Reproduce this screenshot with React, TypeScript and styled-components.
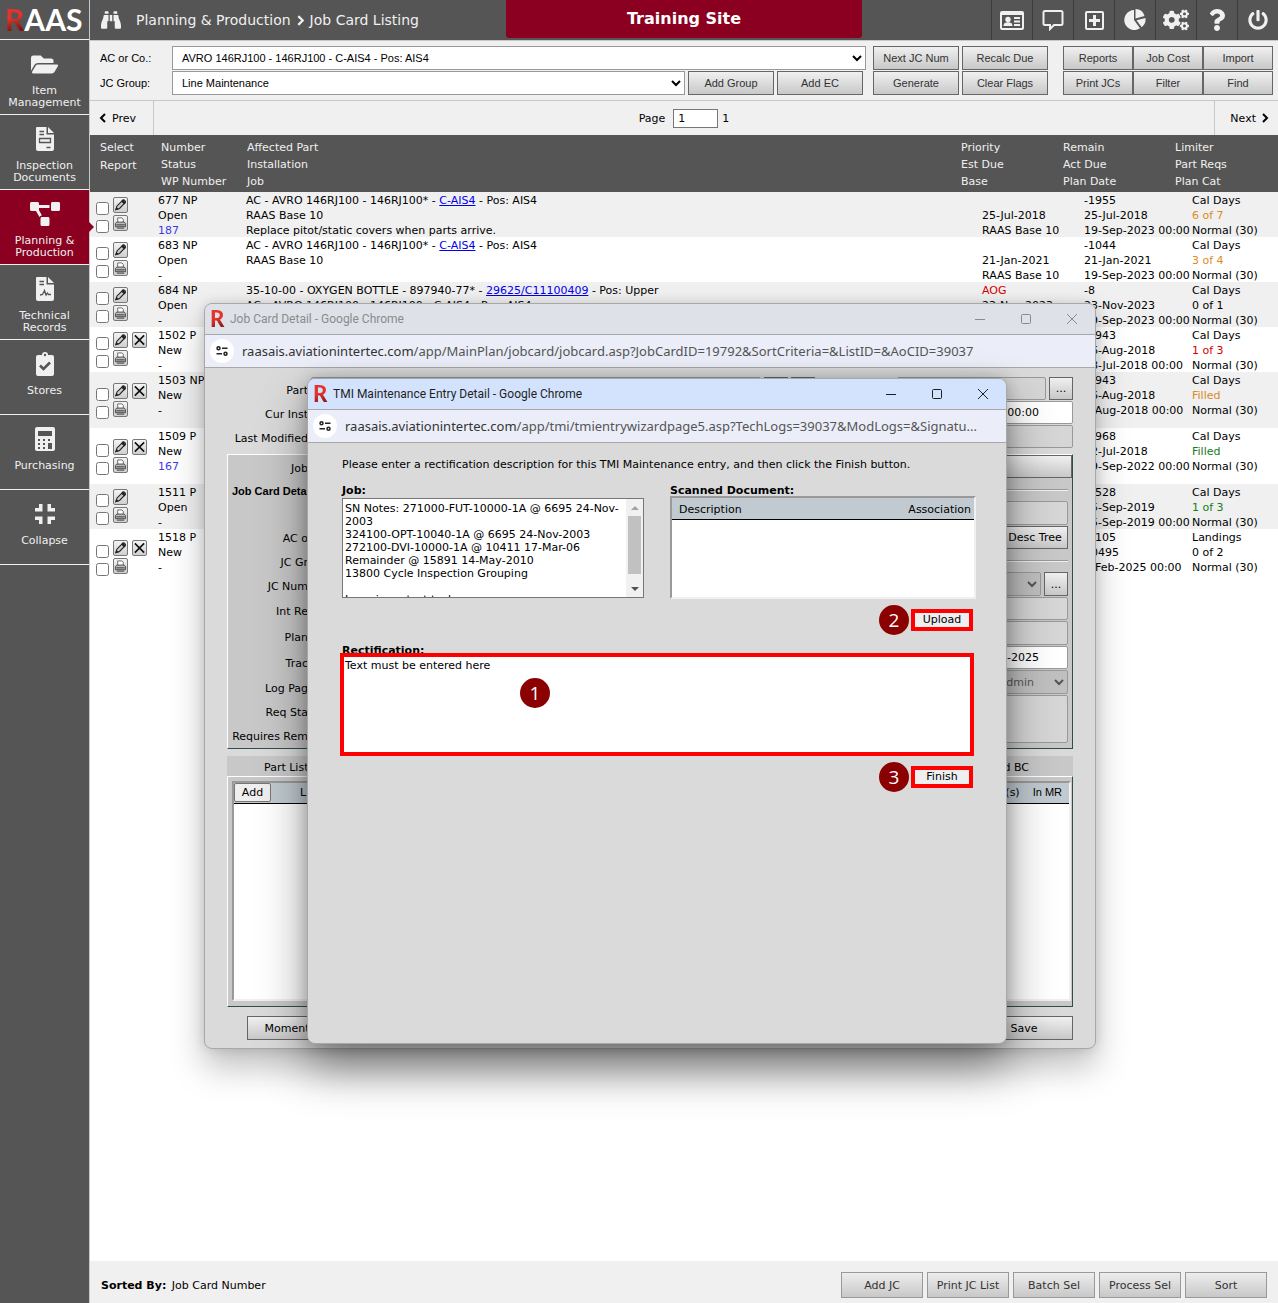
import React from "react";
import styled, { createGlobalStyle, css } from "styled-components";
import {
  FaBinoculars,
  FaCogs,
  FaFolderOpen,
  FaPowerOff,
  FaProjectDiagram,
  FaQuestion,
} from "react-icons/fa";

const ui = '"DejaVu Sans", Verdana, sans-serif';
const arial = '"Liberation Sans", Arial, sans-serif';
const chromeTitle = 'Roboto, "Segoe UI", sans-serif';
const chromeUrl = '"Noto Sans", "Segoe UI", sans-serif';

const GlobalStyle = createGlobalStyle`
  * { box-sizing: border-box; }
  body { margin: 0; background: #fff; color: #000; font: 11px/15px ${ui}; }
  button, input, select, textarea { font: inherit; color: inherit; margin: 0; border-radius: 0; }
  button { padding: 0; white-space: nowrap; }
`;

/* ---------- page frame ---------- */

const Page = styled.div`
  position: relative;
  display: grid;
  grid-template-columns: 90px 1fr;
  min-height: 100vh;
`;

const Sidebar = styled.nav`
  background: #555;
  border-right: 1px solid #c8c8c8;
  color: #f0f0f0;
`;

const Logo = styled.div`
  height: 40px;
  padding-left: 5px;
  border-bottom: 1px solid #f0f0f0;
  color: #fff;
  font: 700 30px/39px Lato, sans-serif;
`;

const RedR = styled.span`
  color: transparent;
  background: linear-gradient(165deg, #e3342c 45%, #7d1512 80%);
  background-clip: text;
  -webkit-background-clip: text;
`;

const NavItem = styled.a<{ $active?: boolean }>`
  position: relative;
  display: flex;
  flex-direction: column;
  align-items: center;
  height: 75px;
  padding-top: 12px;
  border-bottom: 1px solid #f0f0f0;
  background: ${(p) => (p.$active ? "#8b0020" : "transparent")};
  color: inherit;
  line-height: 12px;
  text-align: center;
  text-decoration: none;
  ${(p) =>
    p.$active &&
    css`
      &::after {
        content: "";
        position: absolute;
        top: 32px;
        left: 89px;
        border: 5px solid transparent;
        border-left-color: #8b0020;
        border-right-width: 0;
      }
    `}
`;

const NavIcon = styled.span`
  display: flex;
  align-items: center;
  justify-content: center;
  height: 24px;
  margin-bottom: 9px;
`;

const Main = styled.main`
  display: flex;
  flex-direction: column;
  min-width: 0;
`;

const TopBar = styled.header`
  position: relative;
  display: flex;
  align-items: center;
  height: 41px;
  padding-left: 11px;
  border-bottom: 1px solid #c8c8c8;
  background: #555;
  color: #f0f0f0;
`;

const Crumbs = styled.h1`
  display: flex;
  align-items: center;
  gap: 5px;
  flex: 1;
  margin: 0 0 0 15px;
  font-size: 14px;
  font-weight: 400;
  white-space: nowrap;
`;

const SiteBanner = styled.div`
  position: absolute;
  top: 0;
  left: 35%;
  width: 30%;
  height: 38px;
  border-radius: 0 0 3px 3px;
  background: #8b0020;
  color: #fff;
  font: 700 16px/38px ${ui};
  text-align: center;
`;

const TopButton = styled.button`
  display: flex;
  align-items: center;
  justify-content: center;
  width: 41px;
  height: 40px;
  border: 0;
  border-left: 1px solid #3c3c3c;
  background: transparent;
`;

const ToolBar = styled.div`
  display: flex;
  padding: 5px 5px 5px 10px;
  border-bottom: 1px solid #c8c8c8;
  background: #f0f0f0;
  font-family: ${arial};
`;

const Filters = styled.div`
  display: grid;
  flex: 1;
  gap: 1px;
`;

const FilterRow = styled.div<{ $inset?: boolean }>`
  display: flex;
  gap: 3px;
  height: 24px;
  padding-right: ${(p) => (p.$inset ? 3 : 0)}px;
`;

const FilterLabel = styled.label`
  width: 69px;
  line-height: 24px;
`;

const PlainSelect = styled.select`
  flex: 1;
  min-width: 0;
  padding-left: 5px;
  border: 1px solid #999;
  background: #fff;
`;

const ToolButton = styled.button<{ $w?: number }>`
  width: ${(p) => (p.$w ? `${p.$w}px` : "auto")};
  border: 1px solid #666;
  background: linear-gradient(#f0f0f0, #c8c8c8);
  color: #333;
`;

const ButtonGrid = styled.div<{ $cols: string; $gap: string; $left: number }>`
  display: grid;
  grid-template-columns: ${(p) => p.$cols};
  grid-auto-rows: 24px;
  gap: ${(p) => p.$gap};
  margin-left: ${(p) => p.$left}px;
`;

const Pager = styled.div`
  display: flex;
  justify-content: space-between;
  height: 34px;
  background: #f0f0f0;
`;

const PageStep = styled.button<{ $side: "left" | "right" }>`
  display: flex;
  align-items: center;
  justify-content: ${(p) => (p.$side === "left" ? "flex-start" : "flex-end")};
  gap: 5px;
  width: 64px;
  padding: 0 9px;
  border: 0;
  border-${(p) => (p.$side === "left" ? "right" : "left")}: 1px solid #c8c8c8;
  background: transparent;
`;

const PageLabel = styled.label`
  display: flex;
  align-items: center;
  gap: 4px;
`;

const PageInput = styled.input`
  width: 45px;
  height: 19px;
  margin-left: 4px;
  padding: 0 4px;
  border: 1px solid #767676;
  background: #fff;
`;

/* ---------- job card table ---------- */

const Cards = styled.table`
  width: 100%;
  table-layout: fixed;
  border-collapse: collapse;
  white-space: nowrap;
`;

const HeadCell = styled.th<{ $w?: number; $pad?: number; $line?: number }>`
  width: ${(p) => (p.$w ? `${p.$w}px` : "auto")};
  height: 57px;
  padding: 4px 0 0 ${(p) => p.$pad ?? 0}px;
  background: #555;
  color: #f0f0f0;
  font-weight: 400;
  line-height: ${(p) => p.$line ?? 17}px;
  text-align: left;
  vertical-align: top;
`;

const Row = styled.tr<{ $tall?: boolean }>`
  height: ${(p) => (p.$tall ? 56 : 45)}px;
  background: #fff;
  &:nth-child(odd) { background: #f0f0f0; }
`;

const Cell = styled.td<{ $pad?: number }>`
  padding: 0 0 0 ${(p) => p.$pad ?? 0}px;
  vertical-align: top;
`;

const SelectCell = styled.td`
  padding: 0 0 0 6px;
  vertical-align: middle;
`;

const Picks = styled.div`
  display: grid;
  grid-template-columns: 13px 15px 15px;
  grid-auto-rows: 16px;
  gap: 2px 4px;
  height: 45px;
  padding-top: 5px;
`;

const Tick = styled.input`
  width: 13px;
  height: 13px;
  margin: 5px 0 0;
`;

const IconButton = styled.button`
  display: flex;
  align-items: center;
  justify-content: center;
  width: 15px;
  height: 16px;
  border: 1px solid #777;
  border-radius: 2px;
  background: linear-gradient(#f4f4f4, #cfcfcf);
`;

const Line = styled.div<{ $color?: string }>`
  height: 15px;
  color: ${(p) => p.$color ?? "inherit"};
  line-height: 17px;
`;

const PartLink = styled.a`
  color: #0000ee;
`;

const Footer = styled.footer`
  display: flex;
  align-items: center;
  gap: 4px;
  height: 42px;
  margin-top: auto;
  padding: 6px 11px 0;
  background: #f0f0f0;
`;

const SortInfo = styled.p`
  flex: 1;
  margin: 0;
  line-height: 17px;
  b { margin-right: 2px; }
`;

const FootButton = styled.button`
  width: 82px;
  height: 26px;
  border: 1px solid #999;
  background: linear-gradient(#ededed, #c8c8c8);
  color: #333;
`;

/* ---------- pop-up windows ---------- */

const Window = styled.section<{ $x: number; $y: number; $w: number; $h: number; $active?: boolean }>`
  position: absolute;
  left: ${(p) => p.$x}px;
  top: ${(p) => p.$y}px;
  display: flex;
  flex-direction: column;
  width: ${(p) => p.$w}px;
  height: ${(p) => p.$h}px;
  border: 1px solid #a8a8a8;
  border-radius: 8px;
  overflow: hidden;
  background: #dadada;
  box-shadow: ${(p) =>
    p.$active ? "0 24px 48px rgba(0,0,0,.42), 0 0 16px rgba(0,0,0,.22)" : "0 18px 34px rgba(0,0,0,.26), 0 0 12px rgba(0,0,0,.12)"};
`;

const TitleBar = styled.div<{ $active?: boolean }>`
  display: flex;
  align-items: center;
  height: 31px;
  padding: 0 14px 0 5px;
  border-bottom: 1px solid #a8a8a8;
  background: ${(p) => (p.$active ? "#d3e3fd" : "#dee1e8")};
  color: ${(p) => (p.$active ? "#1f1f1f" : "#8b8b8b")};
  font: 12px/30px ${chromeTitle};
`;

const TitleMark = styled(RedR)`
  width: 20px;
  font: 900 22px/28px Lato, sans-serif;
`;

const TitleText = styled.h2`
  flex: 1;
  margin: 0;
  font: inherit;
`;

const Controls = styled.div`
  display: flex;
  gap: 28px;
  button {
    display: flex;
    width: 18px;
    justify-content: center;
    border: 0;
    background: transparent;
  }
`;

const UrlBar = styled.div`
  display: flex;
  align-items: center;
  gap: 8px;
  height: 33px;
  padding: 0 5px;
  border-bottom: 1px solid #a8a8a8;
  background: #ebeef9;
  color: #555;
  font: 13px/18px ${chromeUrl};
  white-space: nowrap;
  b { color: #333; font-weight: 400; }
`;

const SiteInfo = styled.button`
  display: flex;
  align-items: center;
  justify-content: center;
  flex: none;
  width: 24px;
  height: 24px;
  border: 0;
  border-radius: 50%;
  background: #fff;
`;

const CardBody = styled.div`
  display: flex;
  flex-direction: column;
  padding: 9px 22px 0;
`;

const FormRow = styled.div<{ $h?: number }>`
  display: flex;
  align-items: stretch;
  gap: 3px;
  height: ${(p) => p.$h ?? 24}px;
  padding-bottom: 1px;
`;

const FormLabel = styled.label<{ $w?: number; $h?: number }>`
  flex: none;
  width: ${(p) => p.$w ?? 76}px;
  height: ${(p) => p.$h ?? 24}px;
  padding-top: 2px;
  line-height: 23px;
  text-align: right;
  white-space: nowrap;
`;

const fieldLook = css`
  min-width: 0;
  border: 1px solid #999;
  border-radius: 2px;
  text-align: right;
`;

const Field = styled.input<{ $w?: number; $white?: boolean; $pad?: number }>`
  ${fieldLook}
  flex: ${(p) => (p.$w ? `0 0 ${p.$w}px` : "1")};
  padding: 0 ${(p) => p.$pad ?? 28}px 0 4px;
  background: ${(p) => (p.$white ? "#fff" : "#d6d6d6")};
`;

const GreySelect = styled.select`
  flex: 1;
  border: 1px solid #999;
  border-radius: 2px;
  background: #c0c0c0;
  color: #555;
  text-align-last: right;
  padding-right: 17px;
`;

const GreyArea = styled.textarea`
  ${fieldLook}
  flex: 1;
  background: #d6d6d6;
  resize: none;
`;

const FormButton = styled.button<{ $w?: number }>`
  flex: none;
  width: ${(p) => p.$w ?? 24}px;
  border: 1px solid #666;
  background: linear-gradient(#f0f0f0, #c8c8c8);
`;

const Spacer = styled.div`
  flex: 1;
`;

const Panel = styled.div`
  display: flex;
  flex-direction: column;
  margin-top: 5px;
  padding: 0 4px 6px;
  height: 295px;
  border: 1px solid;
  border-color: #fff #2f4f4f #2f4f4f #fff;
  background: #c8c8c8;
`;

const PanelHead = styled(FormRow)`
  margin-right: -4px;
`;

const SectionTitle = styled.h3`
  margin: 0;
  height: 46px;
  padding-top: 5px;
  font: 700 11px/15px ${arial};
`;

const Rule = styled.hr`
  width: 100%;
  height: 2px;
  margin: 10px 0;
  border: 0;
  border-top: 1px solid #999;
  border-bottom: 1px solid #f0f0f0;
`;

const PanelSplit = styled.div`
  display: grid;
  grid-template-columns: 84px 1fr;
`;

const Stack = styled.div`
  display: flex;
  flex-direction: column;
`;

const Tabs = styled.div`
  display: flex;
  justify-content: space-between;
  height: 20px;
  margin-top: 7px;
  padding: 0 44px 0 37px;
  background: #c8c8c8;
  line-height: 23px;
`;

const ListPanel = styled.div`
  height: 231px;
  padding: 4px 1px 6px 4px;
  border: 1px solid;
  border-color: #fff #2f4f4f #2f4f4f #fff;
  background: #c8c8c8;
`;

const ListBox = styled.div<{ $w?: number; $h: number }>`
  width: ${(p) => (p.$w ? `${p.$w}px` : "100%")};
  height: ${(p) => p.$h}px;
  border: 2px solid;
  border-color: #999 #f0f0f0 #f0f0f0 #999;
  background: #fff;
`;

const ListTable = styled.table`
  width: 100%;
  border-collapse: collapse;
  th {
    height: 21px;
    padding: 3px 3px 0 7px;
    border-bottom: 1px solid #000;
    background: #c0cad0;
    font-weight: 400;
    line-height: 18px;
    text-align: left;
    white-space: nowrap;
  }
  th:last-child { text-align: right; }
`;

const PartTable = styled(ListTable)`
  th { height: 20px; padding: 0 7px 0 0; }
  th:last-child { width: 100%; font-family: ${arial}; }
  span { margin-right: 13px; font-family: ${ui}; }
`;

const AddButton = styled.button`
  width: 37px;
  height: 19px;
  margin-right: 22px;
  border: 1px solid #767676;
  border-radius: 2px;
  background: #efefef;
  vertical-align: top;
`;

const CardActions = styled.div`
  display: flex;
  justify-content: space-between;
  height: 24px;
  margin: 9px 0 0 20px;
`;

const TmiBody = styled.div`
  display: flex;
  flex-direction: column;
  padding: 14px 32px 0 34px;
`;

const Hint = styled.p`
  margin: 0 0 12px;
  white-space: nowrap;
`;

const Columns = styled.div`
  display: flex;
  justify-content: space-between;
  margin-right: -2px;
`;

const BoldLabel = styled.label`
  display: block;
  height: 12px;
  font-weight: 700;
  line-height: 13px;
`;

const JobBox = styled.div`
  display: flex;
  width: 302px;
  height: 100px;
  margin-top: 2px;
  border: 1px solid #767676;
  background: #fff;
`;

const JobText = styled.textarea`
  flex: 1;
  padding: 3px 2px;
  border: 0;
  background: transparent;
  line-height: 13px;
  overflow: hidden;
  resize: none;
`;

const ScrollTrack = styled.div`
  display: flex;
  flex-direction: column;
  align-items: center;
  justify-content: space-between;
  width: 17px;
  padding: 7px 2px 6px;
  background: #f1f1f1;
`;

const ScrollThumb = styled.div`
  width: 13px;
  height: 58px;
  margin-bottom: 8px;
  background: #c1c1c1;
`;

const Arrow = styled.span<{ $up?: boolean }>`
  border: 4px solid transparent;
  ${(p) =>
    p.$up
      ? "border-top-width: 0; border-bottom-color: #a3a3a3;"
      : "border-bottom-width: 0; border-top-color: #505050;"}
`;

const StepRow = styled.div`
  display: flex;
  align-items: center;
  justify-content: flex-end;
  gap: 2px;
  height: 30px;
  margin: 6px 0 9px;
  padding-right: 1px;
`;

const Badge = styled.span`
  display: flex;
  align-items: center;
  justify-content: center;
  width: 30px;
  height: 30px;
  border-radius: 50%;
  background: #8b0000;
  color: #fff;
  font: 19px/28px "Open Sans", sans-serif;
`;

const StepButton = styled.button`
  width: 62px;
  height: 22px;
  border: 4px solid #f00;
  background: #efefef;
  line-height: 14px;
`;

const RectifyWrap = styled.div`
  position: relative;
  margin: -3px 0 0 -2px;
`;

const RectifyText = styled.textarea`
  display: block;
  width: 100%;
  height: 103px;
  padding: 1px;
  border: 4px solid #f00;
  background: #fff;
  resize: none;
`;

const FloatingBadge = styled(Badge)`
  position: absolute;
  top: 25px;
  left: 180px;
`;

/* ---------- drawings ---------- */

const Svg = ({ w, h, box, children }: { w: number; h: number; box: string; children: React.ReactNode }) => (
  <svg width={w} height={h} viewBox={box} fill="currentColor" aria-hidden="true">{children}</svg>
);

const DocIcon = ({ signed }: { signed?: boolean }) => (
  <Svg w={20} h={26} box="0 0 20 26">
    <path d="M2 1h9.500v7.500H19V23a2 2 0 0 1-2 2H3a2 2 0 0 1-2-2V2a1 1 0 0 1 1-1z" />
    <path d="M13 1l6 6h-6z" />
    <g stroke="#555" fill="none" strokeWidth="1.300">
      <path d="M4.500 5.500h4.500M4.500 8.500h4.500" />
      {signed ? <path d="M5 19l2.500-.5 2-4 1.500 4.500 1.500-2 1 1.500h2.500" /> : <path d="M4.500 12.500h11v4h-11zM11.500 21.500h4" />}
    </g>
  </Svg>
);

const StoreIcon = () => (
  <Svg w={20} h={26} box="0 0 20 26">
    <path d="M3 4h4a3 3 0 0 1 6 0h4a2 2 0 0 1 2 2v17a2 2 0 0 1-2 2H3a2 2 0 0 1-2-2V6a2 2 0 0 1 2-2z" />
    <circle cx="10" cy="4" r="1.200" fill="#555" />
    <path d="M5 14.500l3.500 3.500 6.500-6.500" stroke="#555" strokeWidth="2.600" fill="none" />
  </Svg>
);

const CalcIcon = () => (
  <Svg w={22} h={24} box="0 0 22 24">
    <rect x="1" y="0" width="20" height="24" rx="2" />
    <g fill="#555">
      <rect x="4" y="4" width="14" height="5" />
      {[12, 16, 20].map((y) => [4, 9].map((x) => <rect key={`${x}-${y}`} x={x} y={y} width="2" height="2" />))}
      <rect x="14" y="12" width="2" height="2" />
      <rect x="14" y="16" width="4" height="6" />
    </g>
  </Svg>
);

const CollapseIcon = () => (
  <Svg w={22} h={22} box="0 0 22 22">
    <path d="M5 1h3.500v7.500H1V5h4zM13.500 1H17v4h4v3.500h-7.500zM1 13.500h7.500V21H5v-4H1zM13.500 13.500H21V17h-4v4h-3.500z" />
  </Svg>
);

const CardIcon = () => (
  <Svg w={24} h={19} box="0 0 24 19">
    <path fillRule="evenodd" d="M2 0h20a2 2 0 0 1 2 2v15a2 2 0 0 1-2 2H2a2 2 0 0 1-2-2V2a2 2 0 0 1 2-2zM2 4v13h20V4z" />
    <circle cx="8" cy="8.500" r="2.700" />
    <path d="M3.500 15c0-3 2-3.800 4.500-3.800s4.500.8 4.500 3.800z" />
    <path d="M14 6h6v2h-6zM14 9.500h6v2h-6zM14 13h6v2h-6z" />
  </Svg>
);

const ChatIcon = () => (
  <Svg w={22} h={22} box="0 0 22 22">
    <path d="M3 2h16a1.500 1.500 0 0 1 1.500 1.500v11A1.500 1.500 0 0 1 19 16h-7l-4 4v-4H3a1.500 1.500 0 0 1-1.500-1.500v-11A1.500 1.500 0 0 1 3 2z" fill="none" stroke="currentColor" strokeWidth="2" />
  </Svg>
);

const PlusIcon = () => (
  <Svg w={19} h={19} box="0 0 19 19">
    <rect x="1" y="1" width="17" height="17" rx="1" fill="none" stroke="currentColor" strokeWidth="2" />
    <path d="M8 4h3v4h4v3h-4v4H8v-4H4V8h4z" />
  </Svg>
);

const PieIcon = () => (
  <Svg w={24} h={22} box="0 0 24 22">
    <path d="M11 11V1a10 10 0 1 0 6 18.200z" />
    <path d="M12.500 9.500V0a9.500 9.500 0 0 1 9 7z" />
    <path d="M13.500 11.200L22.500 9a10 10 0 0 1-3.800 9.200z" />
  </Svg>
);

const Chevron = ({ left, size = 10 }: { left?: boolean; size?: number }) => (
  <Svg w={size - 2} h={size} box="0 0 8 10">
    <path d={left ? "M6 1L2 5l4 4" : "M2 1l4 4-4 4"} fill="none" stroke="currentColor" strokeWidth="2" />
  </Svg>
);

const PencilIcon = () => (
  <Svg w={14} h={14} box="0 0 14 14">
    <path d="M2 12l1.300-4L9 2.200a1.700 1.700 0 0 1 2.700 2.500L6 10.700z" fill="#ccc" stroke="#222" strokeWidth="1.200" />
    <path d="M1.500 12.500l1-3.500 2.500 2.500zM7.500 3L9.500 1l3.500 3.500-2 2z" fill="#222" />
  </Svg>
);

const PrinterIcon = () => (
  <Svg w={14} h={14} box="0 0 14 14">
    <path d="M4 6V1.500h4.500L10 3v3" fill="#fff" stroke="#666" />
    <path d="M1.500 7.500L3 6h8l1.500 1.500V11h-11z" fill="#bbb" stroke="#444" />
    <path d="M2.500 9h9M3 12.500h8" stroke="#333" />
  </Svg>
);

const CrossIcon = () => (
  <Svg w={14} h={14} box="0 0 14 14">
    <path d="M2 2l10 10M12 2L2 12" stroke="#111" strokeWidth="1.700" />
  </Svg>
);

const TuneIcon = () => (
  <Svg w={12} h={10} box="0 0 12 10">
    <g fill="none" stroke="#222" strokeWidth="1.500">
      <circle cx="2.500" cy="2.300" r="1.500" />
      <path d="M6 2.300h5.500M.5 7.700H6" />
      <circle cx="9.500" cy="7.700" r="1.500" />
    </g>
  </Svg>
);

const WindowControls = () => (
  <Controls>
    <button aria-label="Minimize"><Svg w={10} h={10} box="0 0 10 10"><path d="M0 5.500h10" stroke="currentColor" /></Svg></button>
    <button aria-label="Maximize"><Svg w={10} h={10} box="0 0 10 10"><rect x=".5" y=".5" width="9" height="9" rx="1" fill="none" stroke="currentColor" /></Svg></button>
    <button aria-label="Close"><Svg w={10} h={10} box="0 0 10 10"><path d="M0 0l10 10M10 0L0 10" stroke="currentColor" /></Svg></button>
  </Controls>
);

/* ---------- data ---------- */

const nav = [
  { text: ["Item", "Management"], icon: <FaFolderOpen size={27} /> },
  { text: ["Inspection", "Documents"], icon: <DocIcon /> },
  { text: ["Planning &", "Production"], icon: <FaProjectDiagram size={30} />, active: true },
  { text: ["Technical", "Records"], icon: <DocIcon signed /> },
  { text: ["Stores"], icon: <StoreIcon /> },
  { text: ["Purchasing"], icon: <CalcIcon /> },
  { text: ["Collapse"], icon: <CollapseIcon /> },
];

const topButtons = [
  { name: "Contacts", icon: <CardIcon /> },
  { name: "Messages", icon: <ChatIcon /> },
  { name: "Add", icon: <PlusIcon /> },
  { name: "Statistics", icon: <PieIcon /> },
  { name: "Settings", icon: <FaCogs size={26} /> },
  { name: "Help", icon: <FaQuestion size={22} /> },
  { name: "Log out", icon: <FaPowerOff size={20} /> },
];

const amber = "#dd8a1f";
const red = "#d40000";
const green = "#177d17";
const blue = "#4338e8";

type Card = {
  num: string;
  status: string;
  wp?: string;
  part?: [string, string, string];
  more?: string[];
  due: string[];
  plan: string[];
  limit: string;
  reqs: [string, string?];
  del?: boolean;
  tall?: boolean;
};

const cards: Card[] = [
  { num: "677 NP", status: "Open", wp: "187", part: ["AC - AVRO 146RJ100 - 146RJ100* - ", "C-AIS4", " - Pos: AIS4"], more: ["RAAS Base 10", "Replace pitot/static covers when parts arrive."], due: ["", "25-Jul-2018", "RAAS Base 10"], plan: ["-1955", "25-Jul-2018", "19-Sep-2023 00:00"], limit: "Cal Days", reqs: ["6 of 7", amber] },
  { num: "683 NP", status: "Open", part: ["AC - AVRO 146RJ100 - 146RJ100* - ", "C-AIS4", " - Pos: AIS4"], more: ["RAAS Base 10"], due: ["", "21-Jan-2021", "RAAS Base 10"], plan: ["-1044", "21-Jan-2021", "19-Sep-2023 00:00"], limit: "Cal Days", reqs: ["3 of 4", amber] },
  { num: "684 NP", status: "Open", part: ["35-10-00 - OXYGEN BOTTLE - 897940-77* - ", "29625/C11100409", " - Pos: Upper"], more: ["AC - AVRO 146RJ100 - 146RJ100 - C-AIS4 - Pos: AIS4"], due: ["AOG", "23-Nov-2023"], plan: ["-8", "23-Nov-2023", "19-Sep-2023 00:00"], limit: "Cal Days", reqs: ["0 of 1"] },
  { num: "1502 P", status: "New", due: [], plan: ["-1943", "16-Aug-2018", "18-Jul-2018 00:00"], limit: "Cal Days", reqs: ["1 of 3", red], del: true },
  { num: "1503 NP", status: "New", due: [], plan: ["-1943", "16-Aug-2018", "1-Aug-2018 00:00"], limit: "Cal Days", reqs: ["Filled", amber], del: true, tall: true },
  { num: "1509 P", status: "New", wp: "167", due: [], plan: ["-1968", "12-Jul-2018", "19-Sep-2022 00:00"], limit: "Cal Days", reqs: ["Filled", green], del: true, tall: true },
  { num: "1511 P", status: "Open", due: [], plan: ["-1528", "15-Sep-2019", "15-Sep-2019 00:00"], limit: "Cal Days", reqs: ["1 of 3", green] },
  { num: "1518 P", status: "New", due: [], plan: ["-1105", "10495", "1-Feb-2025 00:00"], limit: "Landings", reqs: ["0 of 2"], del: true, tall: true },
];

const jobNotes = `SN Notes: 271000-FUT-10000-1A @ 6695 24-Nov-2003
324100-OPT-10040-1A @ 6695 24-Nov-2003
272100-DVI-10000-1A @ 10411 17-Mar-06
Remainder @ 15891 14-May-2010
13800 Cycle Inspection Grouping

Learning a test task`;

/* ---------- parts of the page ---------- */

const CardRow = ({ card }: { card: Card }) => (
  <Row $tall={card.tall}>
    <SelectCell>
      <Picks>
        <Tick type="checkbox" aria-label={`Select ${card.num}`} />
        <IconButton aria-label="Edit"><PencilIcon /></IconButton>
        {card.del ? <IconButton aria-label="Delete"><CrossIcon /></IconButton> : <span />}
        <Tick type="checkbox" aria-label={`Report ${card.num}`} />
        <IconButton aria-label="Print"><PrinterIcon /></IconButton>
      </Picks>
    </SelectCell>
    <Cell>
      <Line>{card.num}</Line>
      <Line>{card.status}</Line>
      <Line $color={card.wp && blue}>{card.wp ?? "-"}</Line>
    </Cell>
    <Cell>
      {card.part && <Line>{card.part[0]}<PartLink href="#">{card.part[1]}</PartLink>{card.part[2]}</Line>}
      {card.more?.map((t) => <Line key={t}>{t}</Line>)}
    </Cell>
    <Cell $pad={21}>{card.due.map((t, i) => <Line key={i} $color={t === "AOG" ? red : undefined}>{t}</Line>)}</Cell>
    <Cell $pad={21}>{card.plan.map((t) => <Line key={t}>{t}</Line>)}</Cell>
    <Cell $pad={17}>
      <Line>{card.limit}</Line>
      <Line $color={card.reqs[1]}>{card.reqs[0]}</Line>
      <Line>Normal (30)</Line>
    </Cell>
  </Row>
);

const JobCardWindow = () => (
  <Window $x={204} $y={303} $w={892} $h={746}>
    <TitleBar>
      <TitleMark>R</TitleMark>
      <TitleText>Job Card Detail - Google Chrome</TitleText>
      <WindowControls />
    </TitleBar>
    <UrlBar>
      <SiteInfo aria-label="Site information"><TuneIcon /></SiteInfo>
      <span><b>raasais.aviationintertec.com</b>/app/MainPlan/jobcard/jobcard.asp?JobCardID=19792&amp;SortCriteria=&amp;ListID=&amp;AoCID=39037</span>
    </UrlBar>
    <CardBody>
      <FormRow>
        <FormLabel $w={81} htmlFor="part">Part</FormLabel>
        <Field id="part" $w={450} />
        <FormButton>...</FormButton>
        <FormButton>...</FormButton>
        <Spacer />
        <Field aria-label="Serial" $w={149} />
        <FormButton>...</FormButton>
      </FormRow>
      <FormRow>
        <FormLabel $w={81} htmlFor="inst">Cur Inst</FormLabel>
        <Field id="inst" $white $pad={33} defaultValue="00:00" />
      </FormRow>
      <FormRow>
        <FormLabel $w={81} htmlFor="mod">Last Modified</FormLabel>
        <Field id="mod" />
      </FormRow>
      <Panel>
        <PanelHead>
          <FormLabel htmlFor="job-no">Job</FormLabel>
          <Spacer />
          <FormButton id="job-no" $w={200} aria-label="Job" />
        </PanelHead>
        <PanelSplit>
          <Stack>
            <SectionTitle>Job Card Detail</SectionTitle>
            <FormLabel htmlFor="ac-on">AC o</FormLabel>
            <FormLabel htmlFor="jc-grp">JC Gr</FormLabel>
            <FormLabel $h={25} htmlFor="jc-num">JC Num</FormLabel>
            <FormLabel $h={26} htmlFor="int">Int Re</FormLabel>
            <FormLabel $h={26} htmlFor="plan">Plan</FormLabel>
            <FormLabel $h={25} htmlFor="trac">Trac</FormLabel>
            <FormLabel htmlFor="log">Log Pag</FormLabel>
            <FormLabel htmlFor="req">Req Sta</FormLabel>
            <FormLabel htmlFor="req">Requires Rem</FormLabel>
          </Stack>
          <Stack>
            <Rule />
            <FormRow $h={25}><Field id="ac-on" /></FormRow>
            <FormRow><Spacer /><FormButton id="jc-grp" $w={66}>Desc Tree</FormButton></FormRow>
            <Rule />
            <FormRow $h={25}><GreySelect id="jc-num"><option /></GreySelect><FormButton>...</FormButton></FormRow>
            <FormRow><Field id="int" /></FormRow>
            <FormRow $h={25}><Field id="plan" /></FormRow>
            <FormRow><Field id="trac" $white defaultValue="26-Feb-2025" /></FormRow>
            <FormRow $h={25}><GreySelect id="log"><option>RAAS Admin</option></GreySelect></FormRow>
            <FormRow $h={49}><GreyArea id="req" /></FormRow>
          </Stack>
        </PanelSplit>
      </Panel>
      <Tabs><span>Part List</span><span>Closed BC</span></Tabs>
      <ListPanel>
        <ListBox $h={220}>
          <PartTable>
            <thead>
              <tr>
                <th><AddButton>Add</AddButton></th>
                <th>Line</th>
                <th><span>Bin(s)</span>In MR</th>
              </tr>
            </thead>
          </PartTable>
        </ListBox>
      </ListPanel>
      <CardActions>
        <FormButton $w={98}>Momentary</FormButton>
        <FormButton $w={98}>Save</FormButton>
      </CardActions>
    </CardBody>
  </Window>
);

const TmiWindow = () => (
  <Window $x={307} $y={378} $w={700} $h={666} $active>
    <TitleBar $active>
      <TitleMark>R</TitleMark>
      <TitleText>TMI Maintenance Entry Detail - Google Chrome</TitleText>
      <WindowControls />
    </TitleBar>
    <UrlBar>
      <SiteInfo aria-label="Site information"><TuneIcon /></SiteInfo>
      <span><b>raasais.aviationintertec.com</b>/app/tmi/tmientrywizardpage5.asp?TechLogs=39037&amp;ModLogs=&amp;Signatu...</span>
    </UrlBar>
    <TmiBody>
      <Hint>Please enter a rectification description for this TMI Maintenance entry, and then click the Finish button.</Hint>
      <Columns>
        <div>
          <BoldLabel htmlFor="job">Job:</BoldLabel>
          <JobBox>
            <JobText id="job" readOnly value={jobNotes} />
            <ScrollTrack><Arrow $up /><ScrollThumb /><Arrow /></ScrollTrack>
          </JobBox>
        </div>
        <div>
          <BoldLabel as="div">Scanned Document:</BoldLabel>
          <ListBox $w={306} $h={103}>
            <ListTable>
              <thead><tr><th>Description</th><th>Association</th></tr></thead>
            </ListTable>
          </ListBox>
        </div>
      </Columns>
      <StepRow><Badge>2</Badge><StepButton>Upload</StepButton></StepRow>
      <BoldLabel htmlFor="rectification">Rectification:</BoldLabel>
      <RectifyWrap>
        <RectifyText id="rectification" defaultValue="Text must be entered here" />
        <FloatingBadge>1</FloatingBadge>
      </RectifyWrap>
      <StepRow><Badge>3</Badge><StepButton>Finish</StepButton></StepRow>
    </TmiBody>
  </Window>
);

export default function App() {
  return (
    <Page>
      <GlobalStyle />
      <Sidebar>
        <Logo><RedR>R</RedR>AAS</Logo>
        {nav.map((n) => (
          <NavItem key={n.text[0]} href="#" $active={n.active}>
            <NavIcon>{n.icon}</NavIcon>
            {n.text.map((t) => <span key={t}>{t}</span>)}
          </NavItem>
        ))}
      </Sidebar>
      <Main>
        <TopBar>
          <FaBinoculars size={20} />
          <Crumbs>Planning &amp; Production <Chevron size={11} /> Job Card Listing</Crumbs>
          <SiteBanner>Training Site</SiteBanner>
          {topButtons.map((b) => <TopButton key={b.name} aria-label={b.name}>{b.icon}</TopButton>)}
        </TopBar>
        <ToolBar>
          <Filters>
            <FilterRow>
              <FilterLabel htmlFor="ac">AC or Co.:</FilterLabel>
              <PlainSelect id="ac"><option>AVRO 146RJ100 - 146RJ100 - C-AIS4 - Pos: AIS4</option></PlainSelect>
            </FilterRow>
            <FilterRow $inset>
              <FilterLabel htmlFor="group">JC Group:</FilterLabel>
              <PlainSelect id="group"><option>Line Maintenance</option></PlainSelect>
              <ToolButton $w={86}>Add Group</ToolButton>
              <ToolButton $w={86}>Add EC</ToolButton>
            </FilterRow>
          </Filters>
          <ButtonGrid $cols="86px 86px" $gap="1px 3px" $left={7}>
            {["Next JC Num", "Recalc Due", "Generate", "Clear Flags"].map((t) => <ToolButton key={t}>{t}</ToolButton>)}
          </ButtonGrid>
          <ButtonGrid $cols="70px 70px 70px" $gap="1px 0" $left={15}>
            {["Reports", "Job Cost", "Import", "Print JCs", "Filter", "Find"].map((t) => <ToolButton key={t}>{t}</ToolButton>)}
          </ButtonGrid>
        </ToolBar>
        <Pager>
          <PageStep $side="left"><Chevron left />Prev</PageStep>
          <PageLabel>Page <PageInput defaultValue="1" /> 1</PageLabel>
          <PageStep $side="right">Next<Chevron /></PageStep>
        </Pager>
        <Cards>
          <thead>
            <tr>
              <HeadCell $w={68} $pad={10} $line={18}>Select<br />Report</HeadCell>
              <HeadCell $w={88} $pad={3}>Number<br />Status<br />WP Number</HeadCell>
              <HeadCell $pad={1}>Affected Part<br />Installation<br />Job</HeadCell>
              <HeadCell $w={102}>Priority<br />Est Due<br />Base</HeadCell>
              <HeadCell $w={112}>Remain<br />Act Due<br />Plan Date</HeadCell>
              <HeadCell $w={103}>Limiter<br />Part Reqs<br />Plan Cat</HeadCell>
            </tr>
          </thead>
          <tbody>{cards.map((c) => <CardRow key={c.num} card={c} />)}</tbody>
        </Cards>
        <Footer>
          <SortInfo><b>Sorted By:</b> Job Card Number</SortInfo>
          {["Add JC", "Print JC List", "Batch Sel", "Process Sel", "Sort"].map((t) => <FootButton key={t}>{t}</FootButton>)}
        </Footer>
      </Main>
      <JobCardWindow />
      <TmiWindow />
    </Page>
  );
}
